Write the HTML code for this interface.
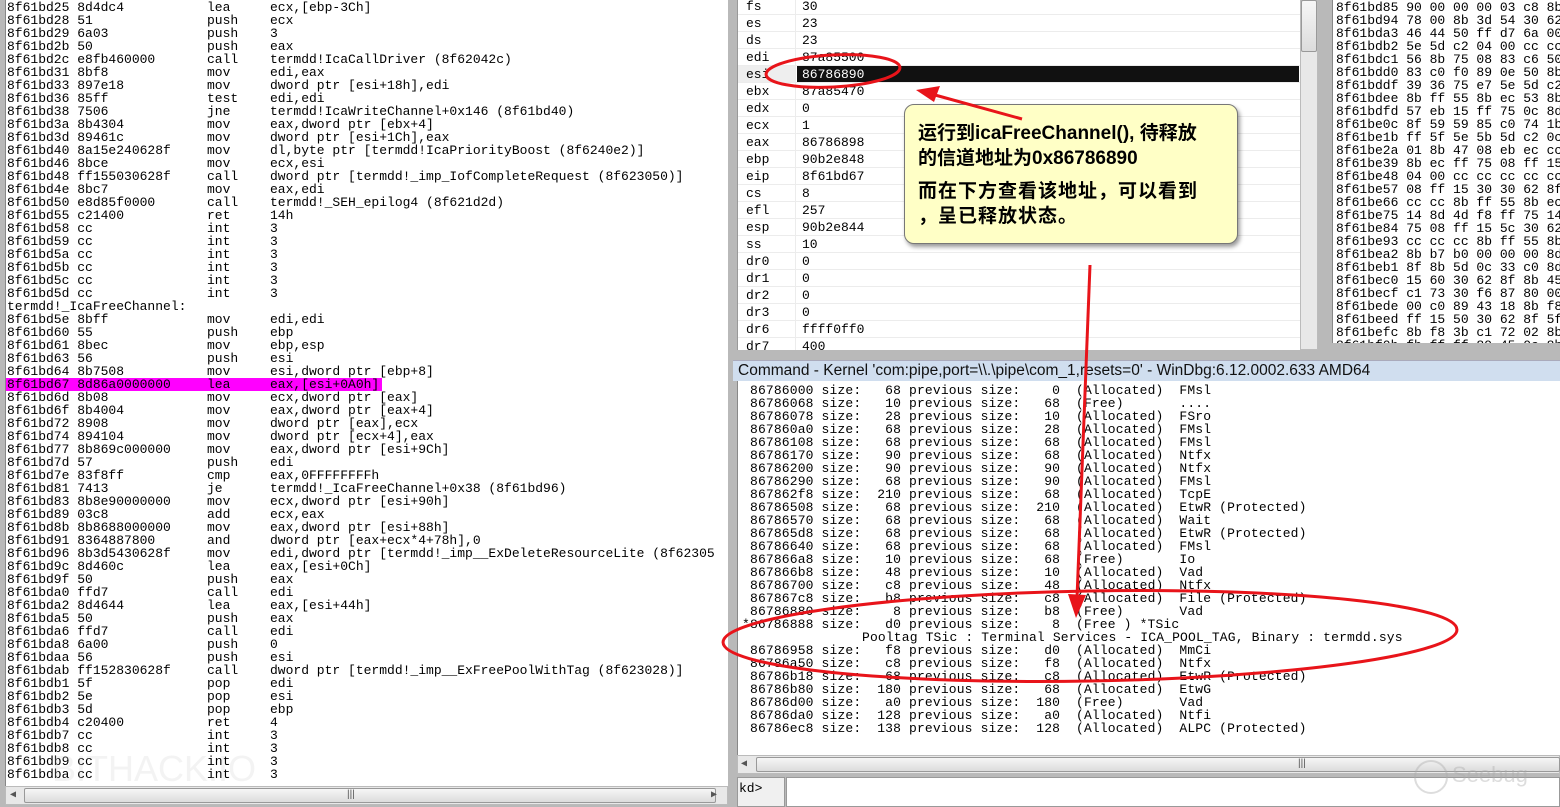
<!DOCTYPE html>
<html><head><meta charset="utf-8"><style>
*{margin:0;padding:0;box-sizing:border-box}
body{width:1560px;height:807px;overflow:hidden;background:#b9b9b9;position:relative;font-family:"Liberation Mono",monospace;font-size:13px;color:#000}
.p{position:absolute;background:#fff;overflow:hidden}
.l{position:absolute;white-space:pre;line-height:13px}
.sb{position:absolute;background:#e8e8e8;border:1px solid #bbb}
.th{position:absolute;background:linear-gradient(#f6f6f6,#dcdcdc);border:1px solid #999;border-radius:2px}
</style></head><body>

<div class="p" style="left:5px;top:0;width:723px;height:786px;border-left:1px solid #888">
<div id="dis"></div>
</div>
<div class="sb" style="left:5px;top:786px;width:723px;height:19px"></div>
<div class="th" style="left:24px;top:788px;width:692px;height:15px"></div>
<div style="position:absolute;left:347px;top:789px;font-size:10px;color:#555;font-family:'Liberation Sans',sans-serif">|||</div>
<div style="position:absolute;left:10px;top:789px;font-size:10px;color:#555">◀</div>
<div style="position:absolute;left:711px;top:789px;font-size:10px;color:#555">▶</div>

<div class="p" style="left:737px;top:0;width:563px;height:350px;border-left:1px solid #999">
<div id="regs"></div>
</div>
<div class="sb" style="left:1300px;top:0;width:18px;height:350px"></div>
<div class="th" style="left:1301px;top:0;width:16px;height:52px"></div>

<div class="p" style="left:1332px;top:0;width:228px;height:343px;border-left:1px solid #888">
<div id="mem"></div>
</div>

<div style="position:absolute;left:733px;top:360px;width:827px;height:21px;background:#d0deef;border-top:1px solid #aab"></div>
<div style="position:absolute;left:738px;top:361px;font-family:'Liberation Sans',sans-serif;font-size:15.5px;line-height:20px;white-space:pre;color:#111">Command - Kernel 'com:pipe,port=\\.\pipe\com_1,resets=0' - WinDbg:6.12.0002.633 AMD64</div>
<div class="p" style="left:737px;top:381px;width:823px;height:374px;border-left:1px solid #888">
<div id="cmd"></div>
</div>
<div class="sb" style="left:737px;top:755px;width:823px;height:19px"></div>
<div class="th" style="left:756px;top:757px;width:804px;height:15px"></div>
<div style="position:absolute;left:1298px;top:758px;font-size:10px;color:#555;font-family:'Liberation Sans',sans-serif">|||</div>
<div style="position:absolute;left:741px;top:758px;font-size:10px;color:#555">◀</div>
<div style="position:absolute;left:737px;top:777px;width:48px;height:30px;background:#f0f0f0;border:1px solid #999"></div>
<div style="position:absolute;left:786px;top:777px;width:774px;height:30px;background:#fff;border:1px solid #999"></div>
<div class="l" style="left:739px;top:782px">kd&gt;</div>
<div style="position:absolute;left:1452px;top:762px;font-family:'Liberation Sans',sans-serif;font-size:22px;color:rgba(170,170,170,.4)">Seebug</div>
<div style="position:absolute;left:1414px;top:760px;width:34px;height:34px;border:2px solid rgba(170,170,170,.4);border-radius:50%"></div>
<div style="position:absolute;left:52px;top:748px;font-family:'Liberation Sans',sans-serif;font-size:36px;color:rgba(200,200,200,.22)">BITHACK.IO</div>

<div style="position:absolute;left:904px;top:104px;width:334px;height:140px;background:#ffffc6;border:1px solid #777;border-radius:10px;box-shadow:2px 3px 4px rgba(0,0,0,.4)"></div>
<div style="position:absolute;left:918px;top:121px;font-family:'Liberation Sans','Noto Sans CJK SC',sans-serif;font-weight:bold;font-size:19px;line-height:25px;white-space:pre">运行到icaFreeChannel(), 待释放
的信道地址为0x86786890</div>
<div style="position:absolute;left:918px;top:179px;font-family:'Liberation Sans','Noto Sans CJK SC',sans-serif;font-weight:bold;font-size:19px;line-height:25px;white-space:pre;letter-spacing:1px">而在下方查看该地址，可以看到
，呈已释放状态。</div>

<svg width="1560" height="807" style="position:absolute;left:0;top:0" xmlns="http://www.w3.org/2000/svg">
<g fill="none" stroke="#e8141a" stroke-width="3">
<ellipse cx="833" cy="71" rx="67" ry="16" transform="rotate(-3 833 71)"/>
<ellipse cx="1090" cy="636" rx="367" ry="45" transform="rotate(-1 1090 636)"/>
<line x1="1022" y1="119" x2="935" y2="95"/>
<line x1="1090" y1="265" x2="1077" y2="598"/>
</g>
<polygon points="916,90 940,86 934,102" fill="#e8141a"/>
<polygon points="1076,618 1068,594 1086,595" fill="#e8141a"/>
</svg>

<script>
function add(id,lines,x0,y0,step,extra){var h='';lines.forEach(function(s,i){h+='<div class="l" style="left:'+x0+'px;top:'+(y0+i*step)+'px;'+(extra||'')+'">'+s+'</div>'});document.getElementById(id).innerHTML+=h;}
var d=[["8f61bd25","8d4dc4","lea","ecx,[ebp-3Ch]"],["8f61bd28","51","push","ecx"],["8f61bd29","6a03","push","3"],["8f61bd2b","50","push","eax"],["8f61bd2c","e8fb460000","call","termdd!IcaCallDriver (8f62042c)"],["8f61bd31","8bf8","mov","edi,eax"],["8f61bd33","897e18","mov","dword ptr [esi+18h],edi"],["8f61bd36","85ff","test","edi,edi"],["8f61bd38","7506","jne","termdd!IcaWriteChannel+0x146 (8f61bd40)"],["8f61bd3a","8b4304","mov","eax,dword ptr [ebx+4]"],["8f61bd3d","89461c","mov","dword ptr [esi+1Ch],eax"],["8f61bd40","8a15e240628f","mov","dl,byte ptr [termdd!IcaPriorityBoost (8f6240e2)]"],["8f61bd46","8bce","mov","ecx,esi"],["8f61bd48","ff155030628f","call","dword ptr [termdd!_imp_IofCompleteRequest (8f623050)]"],["8f61bd4e","8bc7","mov","eax,edi"],["8f61bd50","e8d85f0000","call","termdd!_SEH_epilog4 (8f621d2d)"],["8f61bd55","c21400","ret","14h"],["8f61bd58","cc","int","3"],["8f61bd59","cc","int","3"],["8f61bd5a","cc","int","3"],["8f61bd5b","cc","int","3"],["8f61bd5c","cc","int","3"],["8f61bd5d","cc","int","3"],["termdd!_IcaFreeChannel:"],["8f61bd5e","8bff","mov","edi,edi"],["8f61bd60","55","push","ebp"],["8f61bd61","8bec","mov","ebp,esp"],["8f61bd63","56","push","esi"],["8f61bd64","8b7508","mov","esi,dword ptr [ebp+8]"],["8f61bd67","8d86a0000000","lea","eax,[esi+0A0h]"],["8f61bd6d","8b08","mov","ecx,dword ptr [eax]"],["8f61bd6f","8b4004","mov","eax,dword ptr [eax+4]"],["8f61bd72","8908","mov","dword ptr [eax],ecx"],["8f61bd74","894104","mov","dword ptr [ecx+4],eax"],["8f61bd77","8b869c000000","mov","eax,dword ptr [esi+9Ch]"],["8f61bd7d","57","push","edi"],["8f61bd7e","83f8ff","cmp","eax,0FFFFFFFFh"],["8f61bd81","7413","je","termdd!_IcaFreeChannel+0x38 (8f61bd96)"],["8f61bd83","8b8e90000000","mov","ecx,dword ptr [esi+90h]"],["8f61bd89","03c8","add","ecx,eax"],["8f61bd8b","8b8688000000","mov","eax,dword ptr [esi+88h]"],["8f61bd91","8364887800","and","dword ptr [eax+ecx*4+78h],0"],["8f61bd96","8b3d5430628f","mov","edi,dword ptr [termdd!_imp__ExDeleteResourceLite (8f62305"],["8f61bd9c","8d460c","lea","eax,[esi+0Ch]"],["8f61bd9f","50","push","eax"],["8f61bda0","ffd7","call","edi"],["8f61bda2","8d4644","lea","eax,[esi+44h]"],["8f61bda5","50","push","eax"],["8f61bda6","ffd7","call","edi"],["8f61bda8","6a00","push","0"],["8f61bdaa","56","push","esi"],["8f61bdab","ff152830628f","call","dword ptr [termdd!_imp__ExFreePoolWithTag (8f623028)]"],["8f61bdb1","5f","pop","edi"],["8f61bdb2","5e","pop","esi"],["8f61bdb3","5d","pop","ebp"],["8f61bdb4","c20400","ret","4"],["8f61bdb7","cc","int","3"],["8f61bdb8","cc","int","3"],["8f61bdb9","cc","int","3"],["8f61bdba","cc","int","3"]];
var h='';d.forEach(function(r,i){var y=i*13+1;if(i==29)h+='<div style="position:absolute;left:0;top:'+(y)+'px;width:376px;height:13px;background:#ff00ff"></div>';
if(r.length==1){h+='<div class="l" style="left:1px;top:'+y+'px">'+r[0]+'</div>';}else{h+='<div class="l" style="left:1px;top:'+y+'px">'+r[0]+' '+r[1]+'</div><div class="l" style="left:201px;top:'+y+'px">'+r[2]+'</div><div class="l" style="left:264px;top:'+y+'px">'+r[3]+'</div>';}});
document.getElementById('dis').innerHTML=h;
var regs=[["fs","30"],["es","23"],["ds","23"],["edi","87a85500"],["esi","86786890"],["ebx","87a85470"],["edx","0"],["ecx","1"],["eax","86786898"],["ebp","90b2e848"],["eip","8f61bd67"],["cs","8"],["efl","257"],["esp","90b2e844"],["ss","10"],["dr0","0"],["dr1","0"],["dr2","0"],["dr3","0"],["dr6","ffff0ff0"],["dr7","400"]];
h='<div style="position:absolute;left:57px;top:0;width:1px;height:350px;background:#ececec"></div>';
regs.forEach(function(r,i){var y=i*17-2;h+='<div style="position:absolute;left:0;top:'+(y+16)+'px;width:563px;height:1px;background:#ececec"></div>';
if(i==4){h+='<div style="position:absolute;left:0;top:'+y+'px;width:57px;height:16px;background:#eee"></div><div style="position:absolute;left:59px;top:'+(y)+'px;width:502px;height:16px;background:#111"></div>';}
h+='<div class="l" style="left:8px;top:'+(y+1)+'px;line-height:15px">'+r[0]+'</div><div class="l" style="left:64px;top:'+(y+1)+'px;line-height:15px;'+(i==4?'color:#fff':'')+'">'+r[1]+'</div>';});
document.getElementById('regs').innerHTML=h;
var mem=["8f61bd85 90 00 00 00 03 c8 8b","8f61bd94 78 00 8b 3d 54 30 62","8f61bda3 46 44 50 ff d7 6a 00","8f61bdb2 5e 5d c2 04 00 cc cc","8f61bdc1 56 8b 75 08 83 c6 50","8f61bdd0 83 c0 f0 89 0e 50 8b","8f61bddf 39 36 75 e7 5e 5d c2","8f61bdee 8b ff 55 8b ec 53 8b","8f61bdfd 57 eb 15 ff 75 0c 8d","8f61be0c 8f 59 59 85 c0 74 1b","8f61be1b ff 5f 5e 5b 5d c2 0c","8f61be2a 01 8b 47 08 eb ec cc","8f61be39 8b ec ff 75 08 ff 15","8f61be48 04 00 cc cc cc cc cc","8f61be57 08 ff 15 30 30 62 8f","8f61be66 cc cc 8b ff 55 8b ec","8f61be75 14 8d 4d f8 ff 75 14","8f61be84 75 08 ff 15 5c 30 62","8f61be93 cc cc cc 8b ff 55 8b","8f61bea2 8b b7 b0 00 00 00 8d","8f61beb1 8f 8b 5d 0c 33 c0 8d","8f61bec0 15 60 30 62 8f 8b 45","8f61becf c1 73 30 f6 87 80 00","8f61bede 00 c0 89 43 18 8b f8","8f61beed ff 15 50 30 62 8f 5f","8f61befc 8b f8 3b c1 72 02 8b","8f61bf0b fb ff ff 89 45 0c 8b"];
add('mem',mem,3,1,13);
var c=["86786000 size:   68 previous size:    0  (Allocated)  FMsl","86786068 size:   10 previous size:   68  (Free)       ....","86786078 size:   28 previous size:   10  (Allocated)  FSro","867860a0 size:   68 previous size:   28  (Allocated)  FMsl","86786108 size:   68 previous size:   68  (Allocated)  FMsl","86786170 size:   90 previous size:   68  (Allocated)  Ntfx","86786200 size:   90 previous size:   90  (Allocated)  Ntfx","86786290 size:   68 previous size:   90  (Allocated)  FMsl","867862f8 size:  210 previous size:   68  (Allocated)  TcpE","86786508 size:   68 previous size:  210  (Allocated)  EtwR (Protected)","86786570 size:   68 previous size:   68  (Allocated)  Wait","867865d8 size:   68 previous size:   68  (Allocated)  EtwR (Protected)","86786640 size:   68 previous size:   68  (Allocated)  FMsl","867866a8 size:   10 previous size:   68  (Free)       Io","867866b8 size:   48 previous size:   10  (Allocated)  Vad","86786700 size:   c8 previous size:   48  (Allocated)  Ntfx","867867c8 size:   b8 previous size:   c8  (Allocated)  File (Protected)","86786880 size:    8 previous size:   b8  (Free)       Vad","*86786888 size:   d0 previous size:    8  (Free ) *TSic","\t\tPooltag TSic : Terminal Services - ICA_POOL_TAG, Binary : termdd.sys","86786958 size:   f8 previous size:   d0  (Allocated)  MmCi","86786a50 size:   c8 previous size:   f8  (Allocated)  Ntfx","86786b18 size:   68 previous size:   c8  (Allocated)  EtwR (Protected)","86786b80 size:  180 previous size:   68  (Allocated)  EtwG","86786d00 size:   a0 previous size:  180  (Free)       Vad","86786da0 size:  128 previous size:   a0  (Allocated)  Ntfi","86786ec8 size:  138 previous size:  128  (Allocated)  ALPC (Protected)"];
h='';c.forEach(function(s,i){var x=s[0]=='*'?4:12;if(s[0]=='\t'){x=124;s=s.slice(2);}h+='<div class="l" style="left:'+x+'px;top:'+(3+i*13)+'px;letter-spacing:0.15px">'+s+'</div>';});
document.getElementById('cmd').innerHTML=h;
</script>
</body></html>
